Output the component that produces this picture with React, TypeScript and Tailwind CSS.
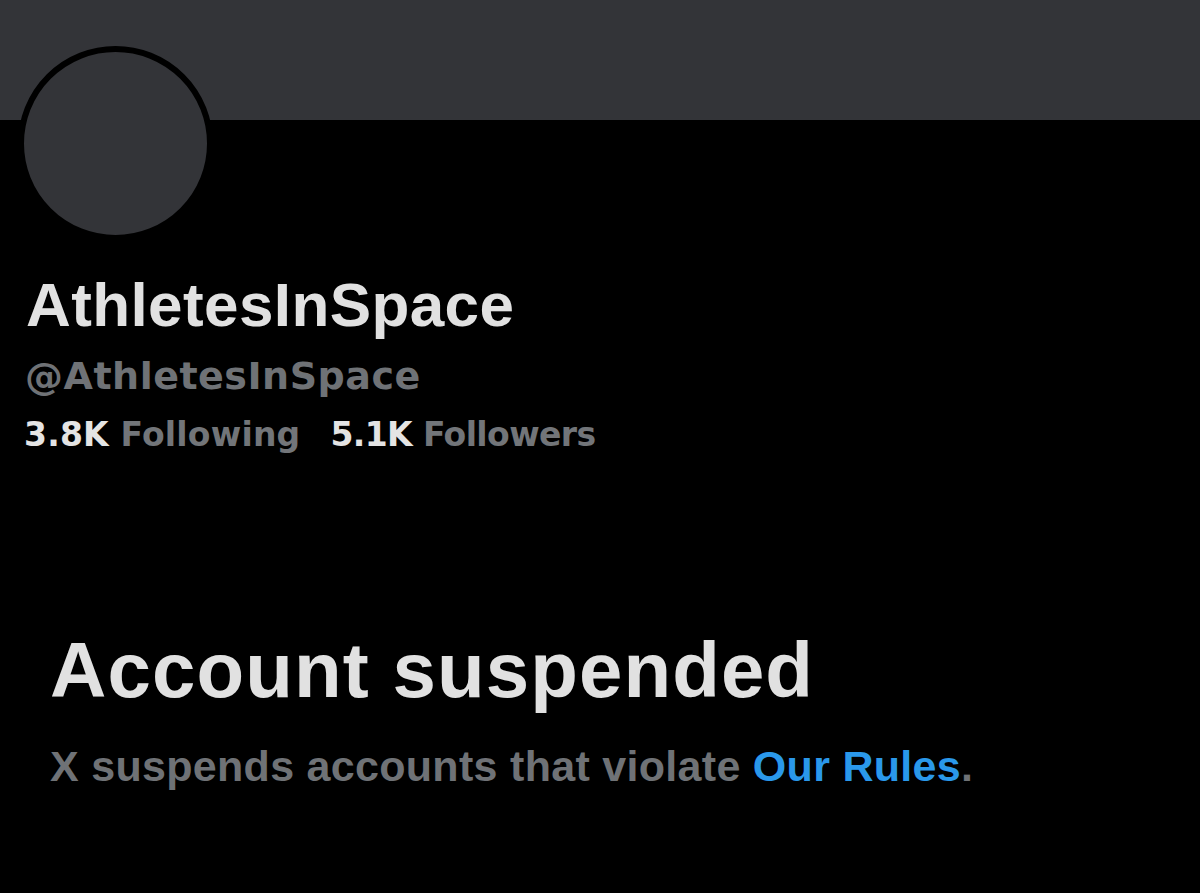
import React from 'react';

const LIB = "font-['Liberation_Sans',Arial,sans-serif]";
const DJV = "font-['DejaVu_Sans',Verdana,sans-serif]";

const Stat: React.FC<{ value: string; label: string; className?: string }> = ({ value, label, className }) => (
  <span className={className}>
    <span className="text-[#e4e4e4]">{value}</span>{' '}
    <span className="text-[#727579]">{label}</span>
  </span>
);

/**
 * Suspended profile page: banner, avatar, names, counts and notice.
 */
const App: React.FC = () => {
  return (
    <div className="w-[1200px] h-[893px] bg-black overflow-hidden">
      {/* Banner */}
      <div className="h-[120px] bg-[#333438]" />

      {/* Avatar */}
      <div className="ml-[18px] -mt-[74px] w-[195px] h-[195px] rounded-full border-[6px] border-black bg-[#333438]" />

      {/* Names and counts */}
      <div className="pl-[26px]">
        <h1 className={`${LIB} mt-[33px] text-[62px] leading-[62px] font-bold text-[#e1e1e1] tracking-[0.4px]`}>
          AthletesInSpace
        </h1>
        <div className={`${DJV} -ml-[1px] mt-[21px] text-[38px] leading-[38px] font-bold text-[#6f7276] tracking-[0.5px]`}>
          @AthletesInSpace
        </div>
        <div className={`${DJV} -ml-[2px] mt-[23px] flex gap-[30px] text-[33px] leading-[33px] font-bold`}>
          <Stat value="3.8K" label="Following" className="tracking-[0.2px]" />
          <Stat value="5.1K" label="Followers" className="tracking-[-0.6px]" />
        </div>
      </div>

      {/* Suspension notice */}
      <div className="pl-[50px]">
        <h2 className={`${LIB} mt-[180px] text-[78px] leading-[78px] font-bold text-[#e1e1e1] tracking-[1.1px]`}>
          Account suspended
        </h2>
        <p className={`${LIB} mt-[36px] text-[43px] leading-[43px] font-bold text-[#6f7276] tracking-[0.3px]`}>
          X suspends accounts that violate <span className="text-[#2a98ea]">Our Rules</span>.
        </p>
      </div>
    </div>
  );
};

export default App;
